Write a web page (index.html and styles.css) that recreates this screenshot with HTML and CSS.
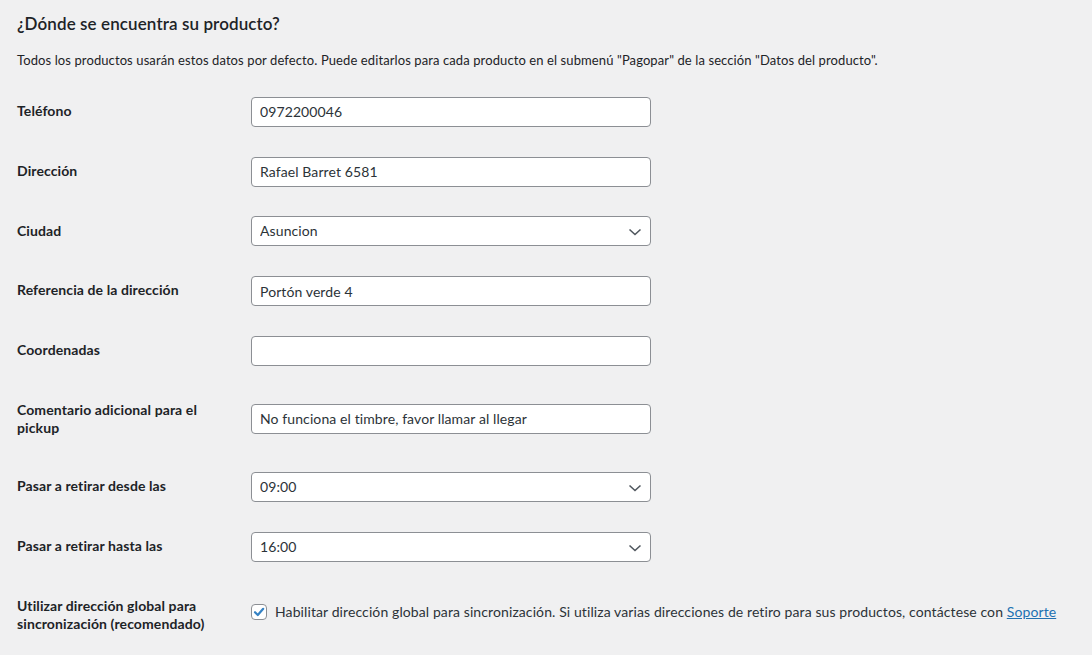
FILE: index.html
```html
<!DOCTYPE html>
<html lang="es">
<head>
<meta charset="utf-8">
<title>Pagopar</title>
<link rel="stylesheet" href="styles.css">
</head>
<body>
<div class="wrap">
  <h2 class="section-title">¿Dónde se encuentra su producto?</h2>
  <p class="section-desc">Todos los productos usarán estos datos por defecto. Puede editarlos para cada producto en el submenú "Pagopar" de la sección "Datos del producto".</p>
  <table class="form-table">
    <colgroup>
      <col class="col-label">
      <col class="col-field">
    </colgroup>
    <tbody>
      <tr>
        <th>Teléfono</th>
        <td><input class="text-field" type="text" value="0972200046"></td>
      </tr>
      <tr>
        <th>Dirección</th>
        <td><input class="text-field" type="text" value="Rafael Barret 6581"></td>
      </tr>
      <tr>
        <th>Ciudad</th>
        <td>
          <div class="select-wrap">
            <select class="select-field"><option>Asuncion</option></select>
            <svg class="chevron" width="16" height="16" viewBox="0 0 16 16"><path d="M2.5 5.5 L8 10.5 L13.5 5.5" fill="none" stroke="#50575e" stroke-width="1.6"/></svg>
          </div>
        </td>
      </tr>
      <tr>
        <th>Referencia de la dirección</th>
        <td><input class="text-field" type="text" value="Portón verde 4"></td>
      </tr>
      <tr>
        <th>Coordenadas</th>
        <td><input class="text-field" type="text" value=""></td>
      </tr>
      <tr>
        <th>Comentario adicional para el pickup</th>
        <td><input class="text-field" type="text" value="No funciona el timbre, favor llamar al llegar"></td>
      </tr>
      <tr>
        <th>Pasar a retirar desde las</th>
        <td>
          <div class="select-wrap">
            <select class="select-field"><option>09:00</option></select>
            <svg class="chevron" width="16" height="16" viewBox="0 0 16 16"><path d="M2.5 5.5 L8 10.5 L13.5 5.5" fill="none" stroke="#50575e" stroke-width="1.6"/></svg>
          </div>
        </td>
      </tr>
      <tr>
        <th>Pasar a retirar hasta las</th>
        <td>
          <div class="select-wrap">
            <select class="select-field"><option>16:00</option></select>
            <svg class="chevron" width="16" height="16" viewBox="0 0 16 16"><path d="M2.5 5.5 L8 10.5 L13.5 5.5" fill="none" stroke="#50575e" stroke-width="1.6"/></svg>
          </div>
        </td>
      </tr>
      <tr>
        <th>Utilizar dirección global para sincronización (recomendado)</th>
        <td class="check-cell">
          <label class="check-label">
            <span class="checkbox">
              <svg width="14" height="14" viewBox="0 0 14 14"><path d="M3 7.2 L5.8 10 L11.2 3.8" fill="none" stroke="#3582c4" stroke-width="2.2" stroke-linecap="round" stroke-linejoin="round"/></svg>
            </span>
            <span class="check-text">Habilitar dirección global para sincronización. Si utiliza varias direcciones de retiro para sus productos, contáctese con <a href="#" class="link">Soporte</a></span>
          </label>
        </td>
      </tr>
    </tbody>
  </table>
</div>
</body>
</html>
```

FILE: styles.css
```css
html, body {
  margin: 0;
  padding: 0;
  background: #f0f0f1;
}

body {
  font-family: Lato, "Noto Sans", sans-serif;
  color: #1d2327;
  font-size: 13px;
  letter-spacing: 0.1px;
}

.wrap {
  padding: 13px 0 0 17px;
}

.section-title {
  margin: 0;
  font-size: 17px;
  line-height: 22px;
  font-weight: 600;
  color: #1d2327;
}

.section-desc {
  margin: 16px 0 0;
  font-size: 13px;
  line-height: 19.5px;
}

.form-table {
  border-collapse: collapse;
  table-layout: fixed;
  width: 1075px;
  margin-top: 11.5px;
}

.col-label {
  width: 234px;
}

.form-table th {
  padding: 20px 34px 20px 0;
  text-align: left;
  vertical-align: top;
  font-size: 14px;
  line-height: 1.3;
  font-weight: 700;
}

.form-table td {
  padding: 14.875px 0;
  vertical-align: middle;
  font-size: 14px;
  line-height: 1.3;
}

.form-table td.check-cell {
  padding-bottom: 21px;
}

.text-field,
.select-field {
  box-sizing: border-box;
  width: 400px;
  height: 30px;
  margin: 0;
  padding: 0 8px;
  border: 1px solid #8c8f94;
  border-radius: 4px;
  background: #fff;
  color: #2c3338;
  font-family: inherit;
  font-size: 14px;
  letter-spacing: 0.1px;
  line-height: 28px;
  display: block;
  outline: none;
}

.select-wrap {
  position: relative;
  width: 400px;
}

.select-field {
  appearance: none;
  -webkit-appearance: none;
  padding-right: 24px;
}

.chevron {
  position: absolute;
  right: 8px;
  top: 8px;
  pointer-events: none;
}

.check-label {
  display: flex;
  align-items: center;
  gap: 8px;
  color: #2c3338;
}

.checkbox {
  box-sizing: border-box;
  width: 16px;
  height: 16px;
  border: 1px solid #8c8f94;
  border-radius: 4px;
  background: #fff;
  display: flex;
  align-items: center;
  justify-content: center;
  flex: none;
}

.check-text {
  white-space: nowrap;
}

.link {
  color: #2271b1;
  text-decoration: underline;
}
```
